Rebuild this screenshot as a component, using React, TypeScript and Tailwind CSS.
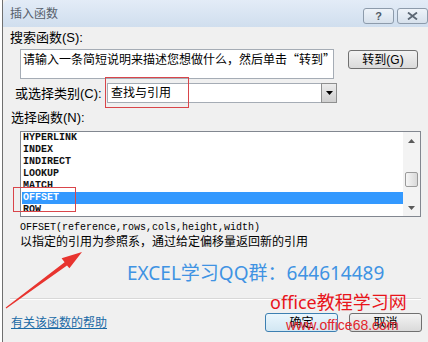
import React from "react";

const CJK = { fontFamily: '"Liberation Sans", "Noto Sans CJK SC", sans-serif' };
const CJKFIRST = { fontFamily: '"Noto Sans CJK SC", sans-serif' };
const MONO = { fontFamily: '"Liberation Mono", "DejaVu Sans Mono", monospace' };
const YAHEI = { fontFamily: '"Noto Sans", "Noto Sans CJK SC", sans-serif' };

function Tri({ down }: { down?: boolean }) {
  return (
    <svg width="7" height="4" viewBox="0 0 7 4">
      {down ? <polygon points="0,0 7,0 3.5,4" fill="#5a5a5a" /> : <polygon points="0,4 7,4 3.5,0" fill="#5a5a5a" />}
    </svg>
  );
}

export default function App() {
  const items = ["HYPERLINK", "INDEX", "INDIRECT", "LOOKUP", "MATCH", "OFFSET", "ROW"];
  return (
    <div className="relative w-[428px] h-[342px] overflow-hidden bg-white text-black" style={CJK}>
      <div className="ml-[2px] w-[426px] h-[342px] border-l border-[#6f6f6f] bg-[#f0f0f0] flex flex-col">
        {/* title bar */}
        <div className="h-[27px] flex justify-between bg-linear-to-b from-[#e3ecf7] to-[#d0deee] rounded-tl-[6px]">
          <div className="pl-[7px] pt-[6px] text-[12px] leading-[16px] text-[#56606c]">插入函数</div>
          <div className="flex gap-[3px] pt-[8px]">
            <div className="w-[31px] h-[16px] rounded-[3px] border border-[#8d9bab] bg-linear-to-b from-[#eef3f9] to-[#d7e1ec] flex items-center justify-center text-[11px] leading-none text-[#505a66] font-bold">?</div>
            <div className="w-[31px] h-[16px] rounded-[3px] border border-[#8d9bab] bg-linear-to-b from-[#eef3f9] to-[#d7e1ec] flex items-center justify-center">
              <svg width="11" height="8" viewBox="0 0 11 8">
                <path d="M1 0.5 L10 7.5 M10 0.5 L1 7.5" stroke="#5b6673" strokeWidth="1.8" />
              </svg>
            </div>
          </div>
        </div>

        {/* search label */}
        <div className="pl-[7px] mt-[3px] text-[13px] leading-[15px]">搜索函数(S):</div>

        {/* search row */}
        <div className="flex items-start mt-[4px] pl-[17px]">
          <div className="w-[314px] h-[30px] border border-[#a5acb5] bg-white px-[2px] text-[12px] leading-[18px] whitespace-nowrap overflow-hidden" style={CJKFIRST}>
            请输入一条简短说明来描述您想做什么，然后单击“转到”
          </div>
          <div className="ml-[14px] mt-[1px] w-[70px] h-[19px] rounded-[3px] border border-[#707070] bg-linear-to-b from-[#f3f3f3] to-[#dadada] flex items-center justify-center text-[12px] leading-none">
            转到(G)
          </div>
        </div>

        {/* category row */}
        <div className="flex items-center mt-[4px] h-[20px]">
          <div className="w-[104px] pl-[12px] text-[13px] leading-[15px]">或选择类别(C):</div>
          <div className="w-[230px] h-[20px] border border-[#a5acb5] bg-white flex items-center justify-between">
            <span className="pl-[3px] text-[12px] leading-[16px]">查找与引用</span>
            <div className="w-[16px] h-[20px] -mr-px border border-[#8e8f8f] bg-linear-to-b from-[#ececec] to-[#cfcfcf] flex items-center justify-center">
              <svg width="7" height="4" viewBox="0 0 7 4">
                <polygon points="0,0 7,0 3.5,4" fill="#000" />
              </svg>
            </div>
          </div>
        </div>

        {/* function label */}
        <div className="pl-[8px] mt-[8px] text-[13px] leading-[14px]">选择函数(N):</div>

        {/* list box */}
        <div className="mt-[6px] ml-[17px] w-[401px] h-[86px] border border-[#828790] bg-white flex">
          <div className="flex-1 flex flex-col pl-[1px]">
            {items.map((it) => (
              <div
                key={it}
                className={
                  "h-[12px] leading-[12px] text-[10px] font-bold pl-[1px] " +
                  (it === "OFFSET" ? "bg-[#3399ff] text-white" : "text-[#111]")
                }
                style={MONO}
              >
                {it}
              </div>
            ))}
          </div>
          <div className="w-[17px] bg-[#f3f3f3] flex flex-col">
            <div className="h-[17px] flex items-center justify-center">
              <Tri />
            </div>
            <div className="mt-[23px] mx-[2px] h-[15px] rounded-[2px] border border-[#9a9a9a] bg-linear-to-r from-[#f6f6f6] to-[#d9d9d9]" />
            <div className="flex-1" />
            <div className="h-[17px] flex items-center justify-center">
              <Tri down />
            </div>
          </div>
        </div>

        {/* syntax */}
        <div className="mt-[5px] pl-[17px] text-[10px] leading-[12px]" style={MONO}>
          OFFSET(reference,rows,cols,height,width)
        </div>
        <div className="mt-[1px] pl-[17px] text-[12px] leading-[14px]">以指定的引用为参照系，通过给定偏移量返回新的引用</div>

        {/* watermark blue */}
        <div className="mt-[12px] pl-[124px] text-[19px] leading-[24px] text-[#3f93e3] whitespace-nowrap" style={YAHEI}>
          EXCEL学习QQ群：644614489
        </div>

        {/* separator */}
        <div className="mt-[13px] mx-[7px]">
          <div className="h-px bg-[#d8d8d8]" />
          <div className="h-px bg-white" />
        </div>

        {/* bottom row */}
        <div className="mt-[13px] h-[19px] flex items-center">
          <span className="pl-[8px] text-[12px] leading-[14px] text-[#1a6aa6] underline">有关该函数的帮助</span>
          <div className="ml-auto mr-[6px] flex gap-[11px]">
            <div className="w-[73px] h-[19px] rounded-[3px] border border-[#3c7fb1] bg-linear-to-b from-[#eaf6fd] to-[#d2e7f3] flex items-center justify-center text-[12px] leading-none">
              确定
            </div>
            <div className="w-[73px] h-[19px] rounded-[3px] border border-[#707070] bg-linear-to-b from-[#f3f3f3] to-[#dadada] flex items-center justify-center text-[12px] leading-none">
              取消
            </div>
          </div>
        </div>
      </div>

      {/* annotations */}
      <div className="absolute left-[105px] top-[77px] w-[84px] h-[31px] border border-[#d9454a]" />
      <div className="absolute left-[13px] top-[187px] w-[63px] h-[25px] border border-[#d9454a]" />
      <svg className="absolute left-0 top-0" width="428" height="342" viewBox="0 0 428 342">
        <polygon points="5.7,307.6 6.3,308.4 67.0,265.5 69.4,268.2 82,252 61.6,258.2 64.6,262.3" fill="#e8342f" />
      </svg>
      <div className="absolute left-[270px] top-[291px] text-[18px] leading-[22px] text-[#e8141b] whitespace-nowrap" style={YAHEI}>
        office教程学习网
      </div>
      <div
        className="absolute left-[286px] top-[317px] text-[14px] leading-[16px] text-[#e3262c] whitespace-nowrap"
        style={{ fontFamily: '"Liberation Sans", Arial, sans-serif' }}
      >
        www.office68.com
      </div>
    </div>
  );
}
